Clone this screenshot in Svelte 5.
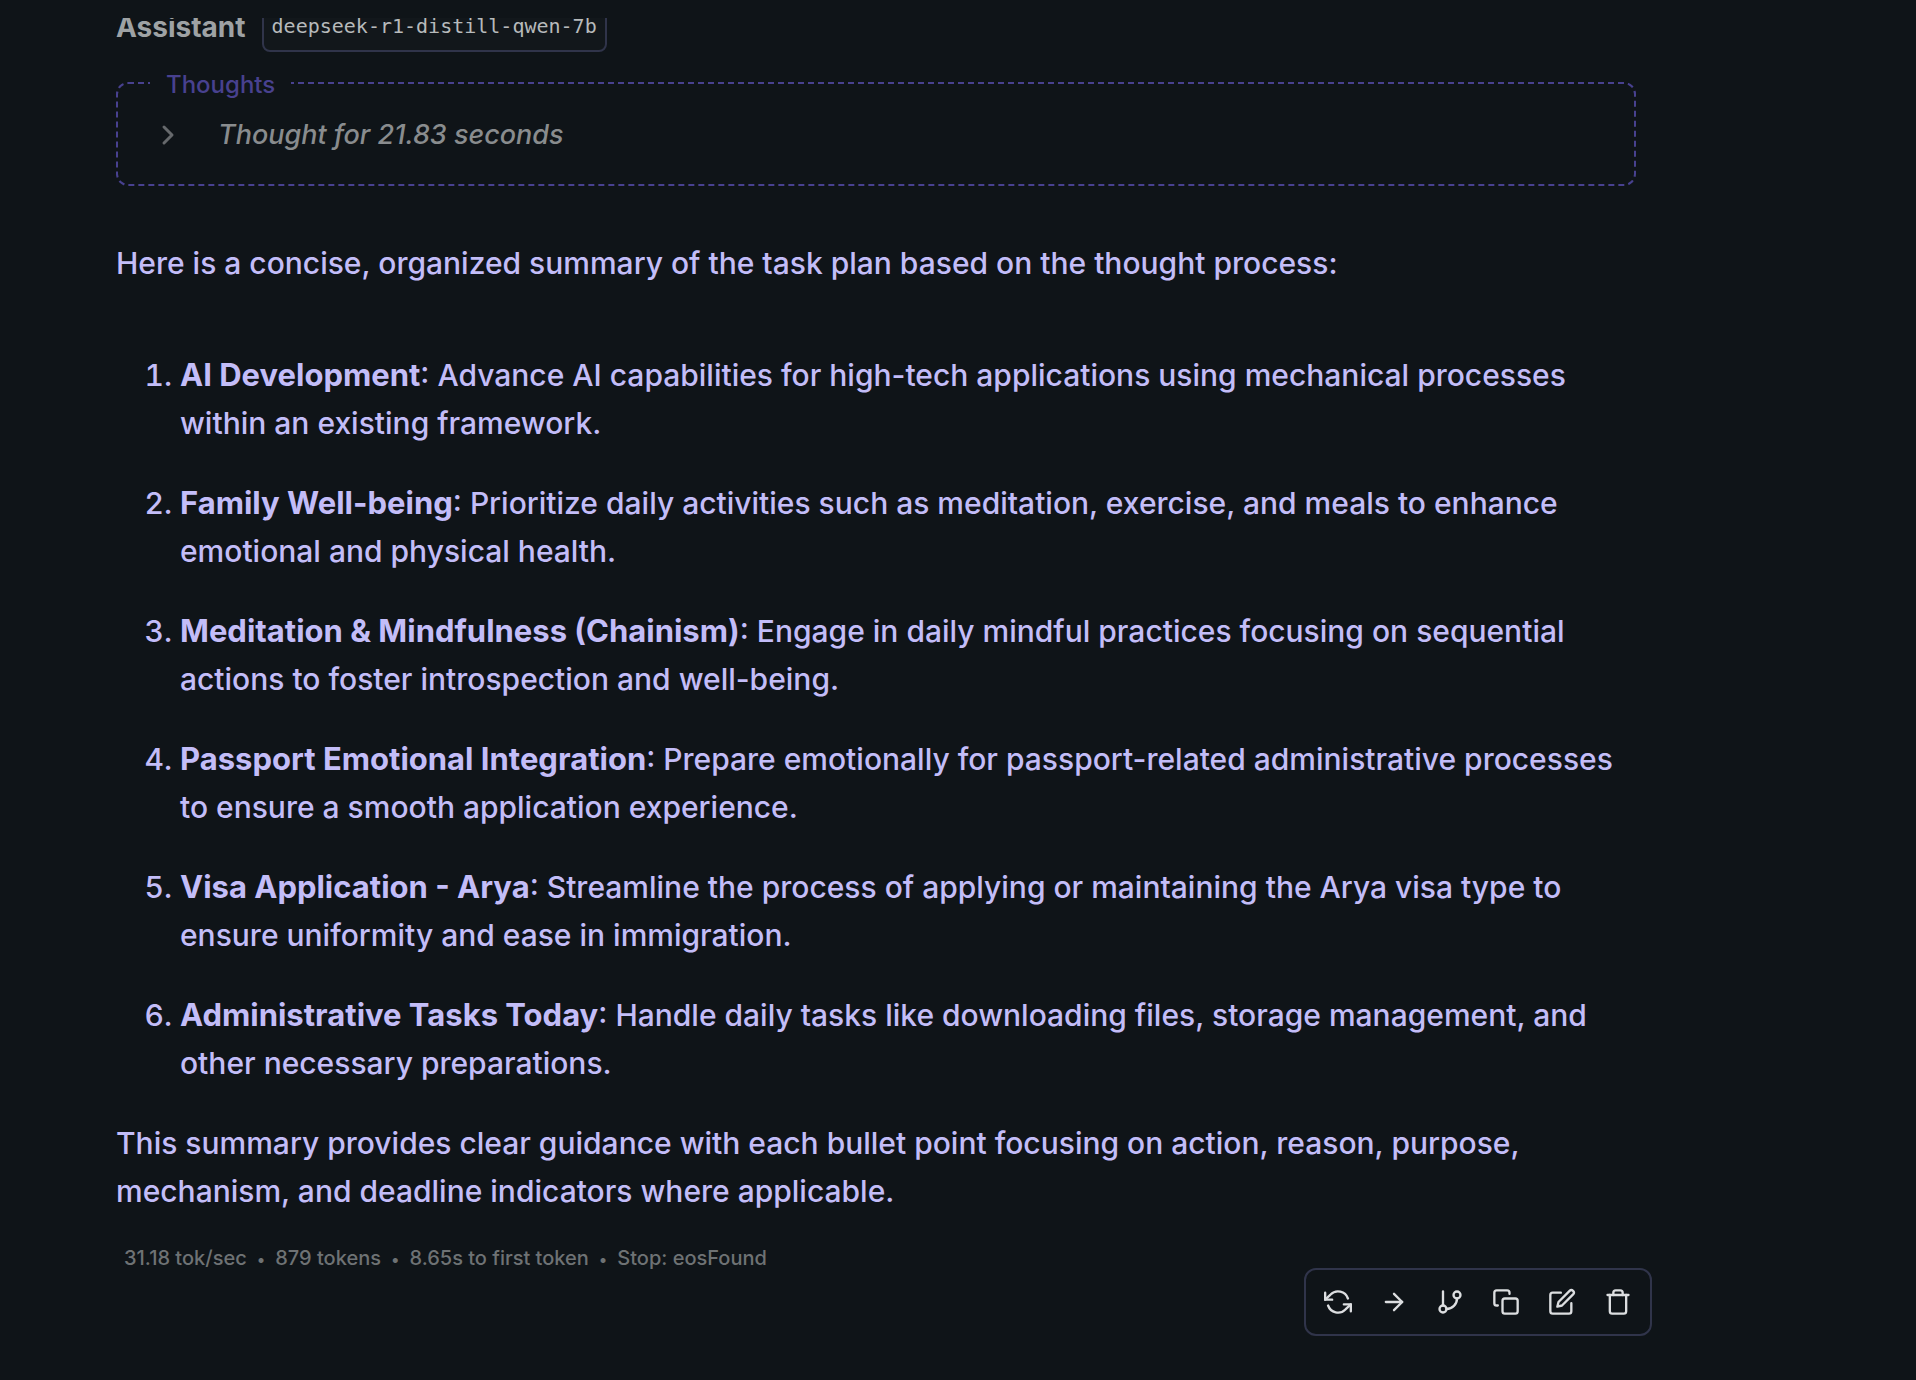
<script>
  const items = [
    ['AI Development', 'Advance AI capabilities for high-tech applications using mechanical processes within an existing framework.'],
    ['Family Well-being', 'Prioritize daily activities such as meditation, exercise, and meals to enhance emotional and physical health.'],
    ['Meditation & Mindfulness (Chainism)', 'Engage in daily mindful practices focusing on sequential actions to foster introspection and well-being.'],
    ['Passport Emotional Integration', 'Prepare emotionally for passport-related administrative processes to ensure a smooth application experience.'],
    ['Visa Application - Arya', 'Streamline the process of applying or maintaining the Arya visa type to ensure uniformity and ease in immigration.'],
    ['Administrative Tasks Today', 'Handle daily tasks like downloading files, storage management, and other necessary preparations.']
  ];
  const stats = ['31.18 tok/sec', '879 tokens', '8.65s to first token', 'Stop: eosFound'];
  const actions = [
    ['Regenerate', ['M1 4v6h6', 'M23 20v-6h-6', 'M20.5 9A9 9 0 0 0 5.6 5.6L1 10M23 14l-4.6 4.4A9 9 0 0 1 3.5 15']],
    ['Continue', ['M5 12h14', 'M12 5l7 7-7 7']],
    ['Branch', ['M6 3v12', 'M21 6a3 3 0 1 1-6 0a3 3 0 0 1 6 0z', 'M9 18a3 3 0 1 1-6 0a3 3 0 0 1 6 0z', 'M18 9a9 9 0 0 1-9 9']],
    ['Copy', ['M11 9h9a2 2 0 0 1 2 2v9a2 2 0 0 1-2 2h-9a2 2 0 0 1-2-2v-9a2 2 0 0 1 2-2z', 'M5 15H4a2 2 0 0 1-2-2V4a2 2 0 0 1 2-2h9a2 2 0 0 1 2 2v1']],
    ['Edit', ['M11 4H4a2 2 0 0 0-2 2v14a2 2 0 0 0 2 2h14a2 2 0 0 0 2-2v-7', 'M18.5 2.5a2.12 2.12 0 0 1 3 3L12 15l-4 1 1-4z']],
    ['Delete', ['M3 6h18', 'M19 6v14a2 2 0 0 1-2 2H7a2 2 0 0 1-2-2V6m3 0V4a2 2 0 0 1 2-2h4a2 2 0 0 1 2 2v2']]
  ];
</script>

<main class="pane">
  <article class="message">
    <header class="sender">
      <h2>Assistant</h2>
      <code>deepseek-r1-distill-qwen-7b</code>
    </header>

    <fieldset class="thoughts">
      <legend>Thoughts</legend>
      <button class="toggle" aria-expanded="false">
        <svg viewBox="0 0 24 24" aria-hidden="true"><path d="M8 4l8 8-8 8" /></svg>
        <em>Thought for 21.83 seconds</em>
      </button>
    </fieldset>

    <div class="body">
      <p>Here is a concise, organized summary of the task plan based on the thought process:</p>
      <ol>
        {#each items as [title, text]}
          <li><strong>{title}</strong>: {text}</li>
        {/each}
      </ol>
      <p>This summary provides clear guidance with each bullet point focusing on action, reason, purpose, mechanism, and deadline indicators where applicable.</p>
    </div>

    <ul class="stats">
      {#each stats as stat}
        <li>{stat}</li>
      {/each}
    </ul>

    <div class="actions" role="toolbar" aria-label="Message actions">
      {#each actions as [label, paths]}
        <button aria-label={label}>
          <svg viewBox="0 0 24 24" aria-hidden="true">
            {#each paths as d}<path {d} />{/each}
          </svg>
        </button>
      {/each}
    </div>
  </article>
</main>

<style>
  :global(body) {
    background: #0f1418;
  }
  .pane {
    margin-top: 18px;
    padding: 0 280px 0 116px;
    overflow: hidden;
    font-family: Inter, 'Liberation Sans', sans-serif;
    color: #c3bdf8;
  }
  .message {
    margin-top: -18px;
    max-width: 1520px;
  }
  .sender {
    display: flex;
    align-items: center;
    gap: 16px;
  }
  h2 {
    margin: 0;
    padding-top: 2px;
    font-size: 28px;
    line-height: 34px;
    font-weight: 700;
    color: #9ea2a4;
  }
  code {
    padding: 9px 8px;
    border: 2px solid #30344a;
    border-radius: 8px;
    background: #12171b;
    font-family: 'DejaVu Sans Mono', 'Liberation Mono', monospace;
    font-size: 20px;
    line-height: 30px;
    color: #b7babb;
  }
  .thoughts {
    margin: 14px 0 0;
    padding: 17px 38px 31px;
    border: 2px dashed #48418f;
    border-radius: 12px;
  }
  legend {
    margin-left: -6px;
    padding: 4px 16px 0;
    font-size: 24px;
    line-height: 30px;
    font-weight: 500;
    color: #48418f;
  }
  button {
    display: flex;
    align-items: center;
    justify-content: center;
    padding: 0;
    border: 0;
    background: none;
    color: inherit;
    font: inherit;
    cursor: pointer;
  }
  svg {
    fill: none;
    stroke: currentColor;
    stroke-width: 2;
    stroke-linecap: round;
    stroke-linejoin: round;
  }
  .toggle {
    gap: 38px;
    font-size: 27px;
    line-height: 36px;
    font-weight: 500;
    color: #898c8e;
  }
  .toggle svg {
    width: 24px;
    height: 24px;
    stroke-width: 3;
    color: #66696c;
  }
  .body {
    margin-top: 53px;
    font-size: 30px;
    line-height: 48px;
    font-weight: 500;
  }
  .body p {
    margin: 0;
  }
  .body ol {
    display: grid;
    gap: 32px;
    margin: 64px 0 32px;
    padding-left: 64px;
  }
  strong {
    font-size: 31px;
    font-weight: 700;
  }
  .stats {
    display: flex;
    margin: 34px 0 0;
    padding: 0 8px;
    list-style: none;
    font-size: 20px;
    line-height: 18px;
    font-weight: 500;
    color: #6e7274;
  }
  .stats li + li::before {
    content: '•';
    margin: 0 10px;
    font-size: 16px;
  }
  .actions {
    display: flex;
    width: fit-content;
    margin: 0 -16px 0 auto;
    padding: 4px;
    border: 2px solid #30344a;
    border-radius: 12px;
  }
  .actions button {
    width: 56px;
    height: 56px;
    color: #dcdee0;
  }
  .actions svg {
    width: 28px;
    height: 28px;
  }
</style>
